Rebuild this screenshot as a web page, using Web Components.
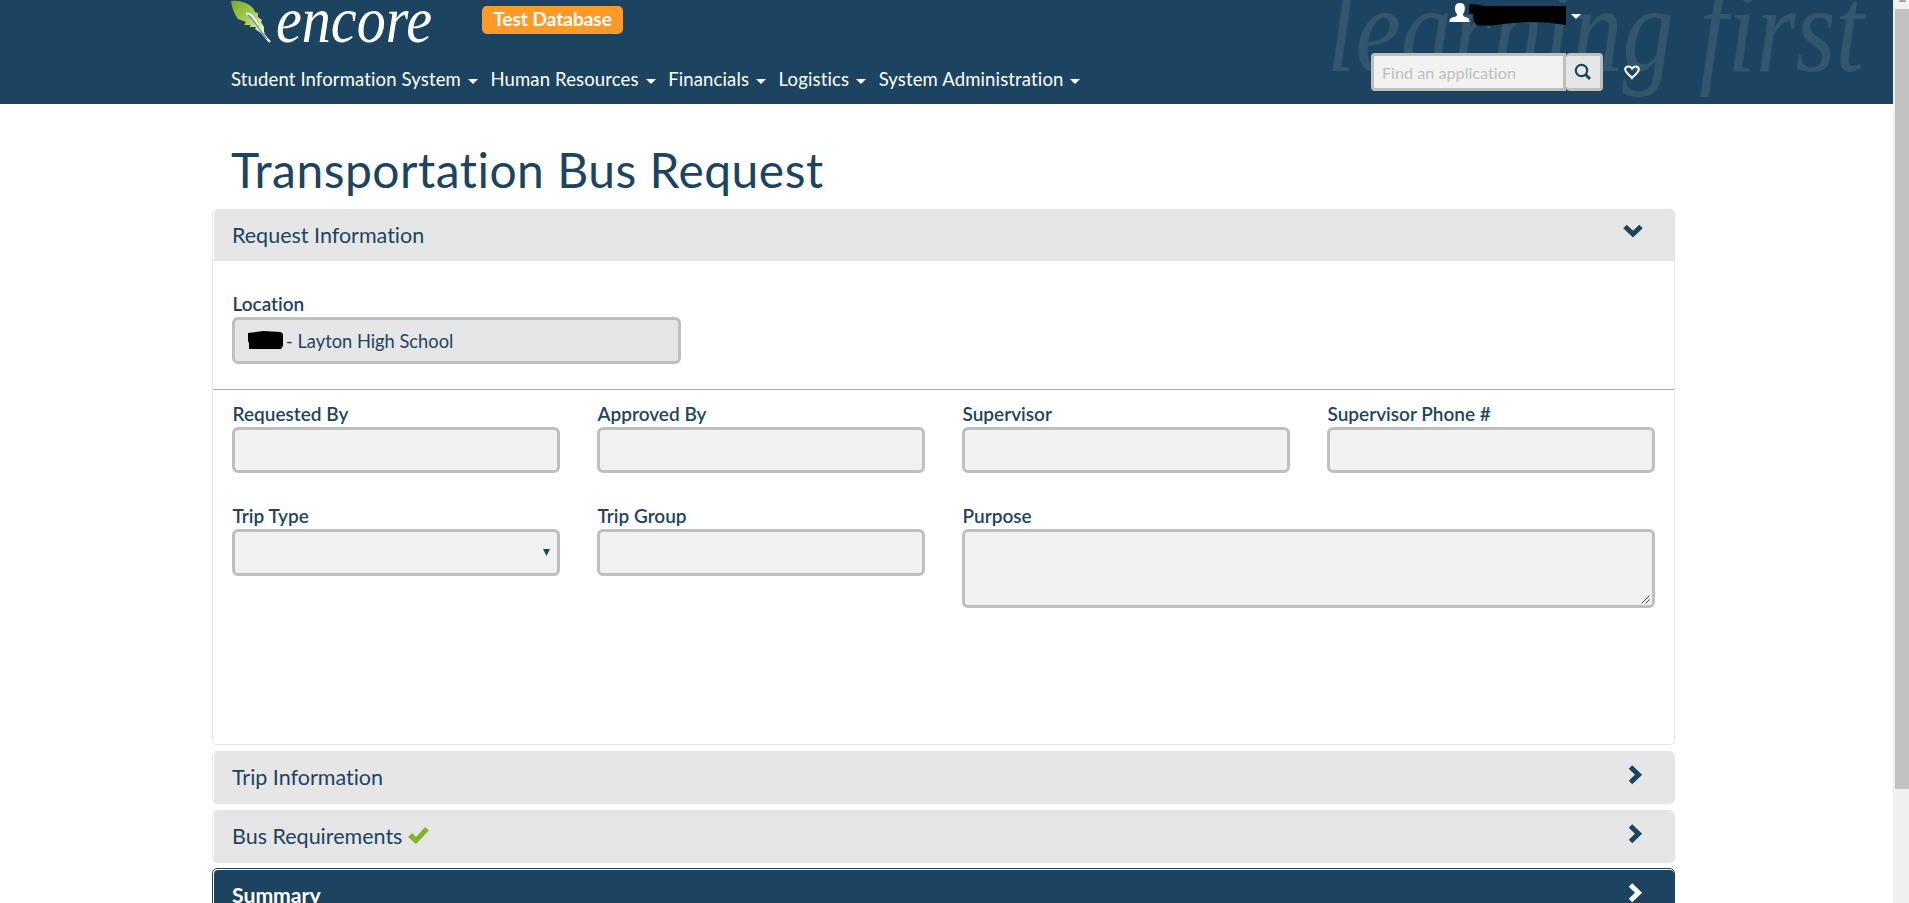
<!DOCTYPE html>
<html lang="en">
<head>
<meta charset="utf-8">
<title>Transportation Bus Request</title>
<style>
html,body{margin:0;height:100%;overflow:hidden;background:#fff}
body{font-family:Lato,"Liberation Sans",sans-serif;color:#1c4461;font-size:18px;font-variant-ligatures:none}
</style>
</head>
<body>
<app-shell>
  <app-header slot="header">
    <nav-item>Student Information System</nav-item>
    <nav-item>Human Resources</nav-item>
    <nav-item>Financials</nav-item>
    <nav-item>Logistics</nav-item>
    <nav-item>System Administration</nav-item>
  </app-header>
  <page-title>Transportation Bus Request</page-title>
  <accordion-panel open>
    <span slot="heading">Request Information</span>
    <request-form></request-form>
  </accordion-panel>
  <accordion-panel><span slot="heading">Trip Information</span></accordion-panel>
  <accordion-panel checked><span slot="heading">Bus Requirements</span></accordion-panel>
  <accordion-panel dark><span slot="heading">Summary</span></accordion-panel>
</app-shell>
<script>
const define = (name, html, setup) => customElements.define(name, class extends HTMLElement {
  constructor() {
    super();
    this.attachShadow({ mode: 'open' }).innerHTML = html;
  }
  connectedCallback() { if (setup) setup(this, this.shadowRoot); }
});

define('app-shell', `
<style>
:host{display:grid;grid-template-columns:1893px 16px;height:100vh;overflow:hidden}
.page{overflow:hidden;height:100vh}
main{margin:0 218px 0 212px;display:flex;flex-direction:column;gap:6px}
</style>
<div class="page"><slot name="header"></slot><main><slot></slot></main></div>
<scroll-bar></scroll-bar>`);

define('scroll-bar', `
<style>
:host{display:flex;flex-direction:column;background:#f0f0f0;height:100%}
svg{display:block;height:9px;width:16px}
i{display:block;height:780px;margin-left:2px;background:#c1c1c1}
</style>
<svg viewBox="0 0 16 9"><path d="M7 0h5l1 1v1H6V1z" fill="#a3a3a3"/></svg><i></i>`);

define('nav-item', `
<style>
:host{display:flex;align-items:center;gap:7px;margin-right:12.5px;color:#fff;font-size:18.5px;line-height:24px;letter-spacing:.14px;white-space:nowrap}
i{border:5px solid transparent;border-top-color:#fff;border-bottom:0;margin-top:4px}
</style><span><slot></slot></span><i></i>`);

define('encore-logo', `
<style>:host{display:block}svg{display:block}</style>
<svg width="205" height="50" viewBox="0 0 205 50">
 <defs><linearGradient id="g" x1="0" y1="0" x2="1" y2="1"><stop offset="0" stop-color="#78aa20"/><stop offset=".55" stop-color="#a9cf5d"/><stop offset="1" stop-color="#f4f9dc"/></linearGradient></defs>
 <path d="M0 1C9 0 17 3 22 8L24 12L27 13L27 17L31 20L30 22L33 27L33 32L34 33L30 33L24 29L25 27L18 27L20 25L13 25L15 22L7 19C3 14 1 8 0 1Z" fill="url(#g)"/>
 <path d="M15 14C20 13 22 17 25 22C29 30 33 36 39 42" fill="none" stroke="#e9f0ed" stroke-width="2.4"/>
 <path d="M17 15C22 18 26 27 36 39" fill="none" stroke="#61839a" stroke-width="1.1"/>
 <text x="45" y="42" textLength="156" lengthAdjust="spacingAndGlyphs" font-family="Liberation Serif,serif" font-style="italic" font-size="65" fill="#fff">encore</text>
</svg>`);

define('app-badge', `
<style>:host{display:block;box-sizing:border-box;width:141px;height:28px;border-radius:5px;background:#ff9927;color:#fff;font-weight:700;font-size:19px;line-height:26px;text-align:center;white-space:nowrap}</style><slot></slot>`);

define('user-menu', `
<style>:host{display:block}svg{display:block}</style>
<svg width="136" height="28" viewBox="0 0 136 28">
 <path d="M11 3C14.500 3 16 5 15.800 9C15.600 12 14.500 13 14 14C13.800 16 14.500 16.500 17 17.300C20 18.300 20.500 19 20.500 22H.5C.5 19 1 18.300 4 17.300C7.500 16.500 8 16 8 14C7 13 6.200 12 6 9C5.800 5 7.500 3 11 3Z" fill="#fff"/>
 <path d="M20 4L27 4.500L35 6H117V25L98 22.500L77 22L59 23.500L43 25.500L29 25.500Q24 24 24.500 14L20 13Z"/>
 <path d="M122 14h10l-5 5z" fill="#fff"/>
</svg>`);

define('search-box', `
<style>
:host{display:grid;grid-template-columns:195px 37px;width:232px;height:38px;color:#1c4461}
input{box-sizing:border-box;width:195px;height:38px;margin:0;border:3px solid #bfbfbf;border-radius:4px 0 0 4px;background:#f2f2f2;padding:1px 8px 1px;font:16.200px Lato,sans-serif;font-variant-ligatures:none;outline:0}
input::placeholder{color:#bfbfbf;opacity:1}
button{box-sizing:border-box;margin:0;padding:0;border:3px solid #bfbfbf;border-left-width:0;border-radius:4px;background:#e6e6e6;display:grid;place-items:center}
svg{display:block}
</style>
<input placeholder="Find an application"><button aria-label="Search"><svg width="18" height="18" viewBox="0 0 18 18" fill="none" stroke="#1c4461"><circle cx="7.500" cy="7.500" r="5.700" stroke-width="2.200"/><path d="M11.500 11.500L16 16" stroke-width="3"/></svg></button>`);

define('app-header', `
<style>
:host{display:block;position:relative;height:104px;background:#1c4461;overflow:hidden}
.mark{position:absolute;left:1300px;top:0}
.bar{position:relative;display:grid;grid-template-columns:1140px 1fr;padding-left:231px}
.brand{display:flex;gap:46px;height:50px}
app-badge{margin-top:6px}
nav{display:flex;margin-top:17px}
user-menu{margin-left:78px}
.tools{display:flex;margin-top:25px;align-items:flex-start;gap:21px}
.heart{display:block;margin-top:12px}
</style>
<svg class="mark" width="593" height="104" viewBox="0 0 593 104" fill="#33566f" font-family="Liberation Serif,serif" font-style="italic" font-size="122">
 <text x="27" y="71" textLength="537" lengthAdjust="spacingAndGlyphs">learning first</text>
</svg>
<div class="bar">
 <div><div class="brand"><encore-logo></encore-logo><app-badge>Test Database</app-badge></div><nav><slot></slot></nav></div>
 <div><user-menu></user-menu><div class="tools"><search-box></search-box>
 <svg class="heart" width="16" height="15" viewBox="0 0 16 15"><path d="M8 13C6.500 10.500 1.200 8 1.200 4.600C1.200 1 6.200 .2 8 3.500C9.800 .2 14.800 1 14.800 4.600C14.800 8 9.500 10.500 8 13Z" fill="none" stroke="#fff" stroke-width="2"/></svg></div></div>
</div>`);

define('page-title', `
<style>:host{display:block;box-sizing:border-box;height:99px;padding:36px 0 0 19px;font-size:48px;line-height:60px;letter-spacing:.48px;white-space:nowrap}</style><slot></slot>`);

define('accordion-panel', `
<style>
:host{display:block;box-sizing:border-box;height:53px;border:1px solid #e6e6e6;border-radius:5px;background:#fff;overflow:hidden}
:host([open]){height:536px}
header{display:flex;justify-content:space-between;box-sizing:border-box;height:51px;margin-left:1px;padding:0 31px 0 18px;background:#e6e6e6;border-radius:4px 4px 0 0;font-size:21.500px;line-height:51px}
.h{display:flex;gap:5px}
.chev{display:block;margin-top:13px}
.ok,.down{display:none}
:host([open]) .down{display:block}:host([open]) .right{display:none}
:host([checked]) .ok{display:block;margin-top:15px}
:host([dark]){border-color:#1c4461;margin-top:-1px}
:host([dark]) header{background:#1c4461;color:#fff;margin-top:1px;font-weight:700;font-size:21.2px}
</style>
<header><div class="h"><slot name="heading"></slot><svg class="ok" width="23" height="19" viewBox="0 0 23 19"><path d="M1 11L5 7L9 11L18 1L22 4.500L9 18Z" fill="#7fb526"/></svg></div>
<svg class="chev right" width="15" height="20" viewBox="0 0 15 20"><path d="M2.500 2L10.500 9.700L2.500 17.500" fill="none" stroke="currentColor" stroke-width="5" stroke-linejoin="miter"/></svg>
<svg class="chev down" width="20" height="15" viewBox="0 0 20 15"><path d="M2 3.500L10 11L18 3.500" fill="none" stroke="currentColor" stroke-width="5"/></svg></header>
<slot></slot>`);

define('form-field', `
<style>
:host{display:block;min-width:0}
label{display:block;font-weight:600;font-size:19px;line-height:24px;height:25px;padding-left:.5px;white-space:nowrap}
.box{box-sizing:border-box;height:46px;border:3px solid #bfbfbf;border-radius:6px;background:#f1f1f1;position:relative;overflow:hidden;display:flex;align-items:center}
:host([readonly]) .box{background:#e6e6e6;height:47px}
:host([select]) .box,:host([short]) .box{height:47px}
:host([area]) .box{height:79px}
.arrow,.grip{display:none}
:host([select]) .arrow{display:block;margin-left:auto;margin-right:7px}
:host([area]) .grip{display:block;margin:auto 2px 1px auto}
</style>
<label></label><div class="box"><slot></slot>
<svg class="arrow" width="7" height="7" viewBox="0 0 7 7"><path d="M0 0h7L3.500 7z" fill="#1c4461"/></svg>
<svg class="grip" width="9" height="9" viewBox="0 0 9 9"><path d="M.5 8.500L8.500 .5M4.500 8.500L8.500 4.500" stroke="#444" stroke-width="1"/></svg></div>`,
(el, root) => { root.querySelector('label').textContent = el.getAttribute('label'); });

define('request-form', `
<style>
:host{display:block}
.location{box-sizing:border-box;height:128px;padding:31px 0 0 19px}
.location form-field{width:449px}
.value{display:flex;align-items:center;gap:3px;padding-left:13px;font-size:18.300px;white-space:nowrap}
hr{margin:0;border:0;height:1px;background:#a9a9a9}
.grid{display:grid;grid-template-columns:repeat(4,328px);column-gap:37px;grid-template-rows:102px 90px;padding:12px 0 0 19px}
.wide{grid-column:span 2}
</style>
<div class="location"><form-field label="Location" readonly><span class="value"><svg width="35" height="19" viewBox="0 0 35 19"><path d="M0 2L15 0L33 1L35 3V15L33 18H1V12L0 10Z"/></svg><span>- Layton High School</span></span></form-field></div>
<hr>
<div class="grid">
<form-field label="Requested By"></form-field><form-field label="Approved By"></form-field><form-field label="Supervisor"></form-field><form-field label="Supervisor Phone #"></form-field>
<form-field label="Trip Type" select></form-field><form-field label="Trip Group" short></form-field><form-field class="wide" label="Purpose" area></form-field>
</div>`);
</script>
</body>
</html>
